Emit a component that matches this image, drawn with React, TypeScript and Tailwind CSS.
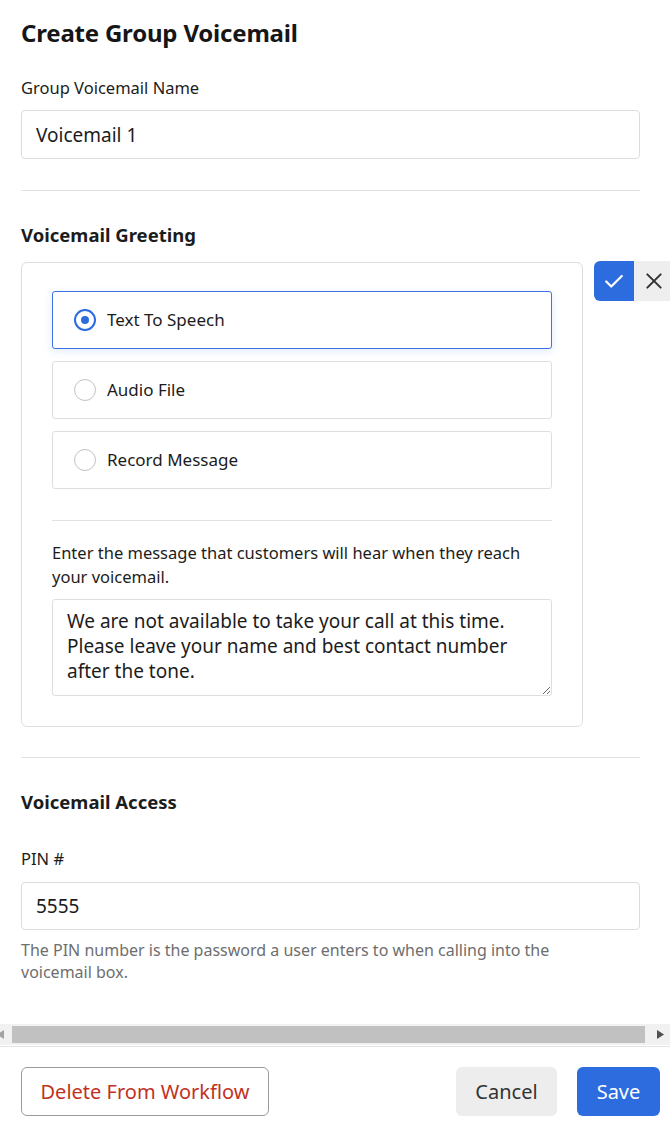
import React, { useState } from "react";

const font = { fontFamily: '"Noto Sans", "Open Sans", sans-serif' };

type Opt = { id: string; label: string };

const options: Opt[] = [
  { id: "tts", label: "Text To Speech" },
  { id: "audio", label: "Audio File" },
  { id: "record", label: "Record Message" },
];

const Radio = ({ checked }: { checked: boolean }) =>
  checked ? (
    <span className="flex h-[22px] w-[22px] items-center justify-center rounded-full border-[2.5px] border-[#2d6cdf]">
      <span className="h-[8px] w-[8px] rounded-full bg-[#2d6cdf]" />
    </span>
  ) : (
    <span className="h-[22px] w-[22px] rounded-full border-[1.5px] border-[#c2c2c2]" />
  );

// fake horizontal scrollbar, the page scrolls a bit sideways
const ScrollBar = () => (
  <div className="relative h-[21px] bg-[#f1f1f1]">
    <svg className="absolute left-[-3px] top-[6px]" width="7" height="9" viewBox="0 0 7 9">
      <path d="M7 0L0 4.5L7 9z" fill="#a3a3a3" />
    </svg>
    <div className="absolute left-[12px] top-[2px] h-[17px] w-[633px] bg-[#c1c1c1]" />
    <svg className="absolute left-[657px] top-[6px]" width="7" height="9" viewBox="0 0 7 9">
      <path d="M0 0L7 4.5L0 9z" fill="#505050" />
    </svg>
  </div>
);

export default function App() {
  const [selected, setSelected] = useState("tts");

  return (
    <div className="flex h-screen w-full flex-col bg-white text-[#1c1c1c]" style={font}>
      <div className="flex-1 overflow-hidden">
        <div className="h-[1024px] w-[685px] pl-[21px] pt-[16px]">
          <h1 className="text-[24px] font-bold leading-[34px] tracking-[-0.2px] text-[#161616]">
            Create Group Voicemail
          </h1>

          <div className="w-[619px]">
            <p className="mt-[27px] text-[16.5px] leading-[22px]">Group Voicemail Name</p>
            <input
              className="mt-[11px] h-[49px] w-full rounded-[4px] border border-[#dcdcdc] px-[14px] text-[19px] outline-none"
              defaultValue="Voicemail 1"
            />
            <div className="mt-[31px] h-px bg-[#e2e2e2]" />
            <h2 className="mt-[32px] text-[18.5px] font-bold leading-[24px]">Voicemail Greeting</h2>
          </div>

          <div className="mt-[15px] flex items-start">
            <div className="w-[562px] rounded-[6px] border border-[#dedede] px-[30px] pb-[30px] pt-[28px]">
              <div className="flex flex-col gap-[12px]">
                {options.map((o) => {
                  const on = selected === o.id;
                  return (
                    <button
                      key={o.id}
                      onClick={() => setSelected(o.id)}
                      className={`flex h-[58px] items-center gap-[11px] rounded-[3px] border bg-white pl-[21px] text-left text-[17px] ${
                        on
                          ? "border-[#3a74dc] shadow-[0_2px_8px_rgba(45,108,223,0.15)]"
                          : "border-[#dedede]"
                      }`}
                    >
                      <Radio checked={on} />
                      <span>{o.label}</span>
                    </button>
                  );
                })}
              </div>
              <div className="mt-[31px] h-px bg-[#e2e2e2]" />
              <p className="mt-[20px] pr-[14px] text-[16.5px] leading-[24px]">
                Enter the message that customers will hear when they reach your voicemail.
              </p>
              <textarea
                className="mt-[10px] block h-[97px] w-full rounded-[3px] border border-[#dedede] px-[14px] pt-[9px] text-[19px] leading-[25px] outline-none"
                style={font}
                defaultValue="We are not available to take your call at this time. Please leave your name and best contact number after the tone."
              />
            </div>
            <div className="ml-[11px] mt-[-1px] flex">
              <button className="flex h-[40px] w-[40px] items-center justify-center rounded-l-[6px] bg-[#2d6cdf]">
                <svg width="22" height="22" viewBox="0 0 24 24" fill="none" stroke="white" strokeWidth="2.4" strokeLinecap="round" strokeLinejoin="round">
                  <path d="M3.5 12.5l5.5 5.5L20.5 6.5" />
                </svg>
              </button>
              <button className="flex h-[40px] w-[40px] items-center justify-center bg-[#eeeeee]">
                <svg width="20" height="20" viewBox="0 0 24 24" fill="none" stroke="#333" strokeWidth="2.4" strokeLinecap="round">
                  <path d="M4 4l16 16M20 4L4 20" />
                </svg>
              </button>
            </div>
          </div>

          <div className="w-[619px]">
            <div className="mt-[30px] h-px bg-[#e2e2e2]" />
            <h2 className="mt-[32px] text-[18.5px] font-bold leading-[24px]">Voicemail Access</h2>
            <p className="mt-[34px] text-[16.5px] leading-[22px]">PIN #</p>
            <input
              className="mt-[12px] h-[48px] w-full rounded-[4px] border border-[#dcdcdc] px-[14px] text-[19px] outline-none"
              defaultValue="5555"
            />
            <p className="mt-[9px] pr-[30px] text-[16px] leading-[22px] text-[#6e6e6e]">
              The PIN number is the password a user enters to when calling into the voicemail box.
            </p>
          </div>
        </div>
        <ScrollBar />
      </div>

      <div className="flex items-center border-t border-[#e2e2e2] pb-[14px] pl-[21px] pr-[10px] pt-[20px]">
        <button className="h-[49px] w-[248px] rounded-[6px] border border-[#9a9a9a] text-[20px] text-[#c0321f]">
          Delete From Workflow
        </button>
        <div className="ml-auto flex gap-[20px]">
          <button className="h-[49px] w-[101px] rounded-[6px] bg-[#ededed] text-[20px] text-[#333]">Cancel</button>
          <button className="h-[49px] w-[83px] rounded-[6px] bg-[#2d6cdf] text-[20px] text-white">Save</button>
        </div>
      </div>
    </div>
  );
}
